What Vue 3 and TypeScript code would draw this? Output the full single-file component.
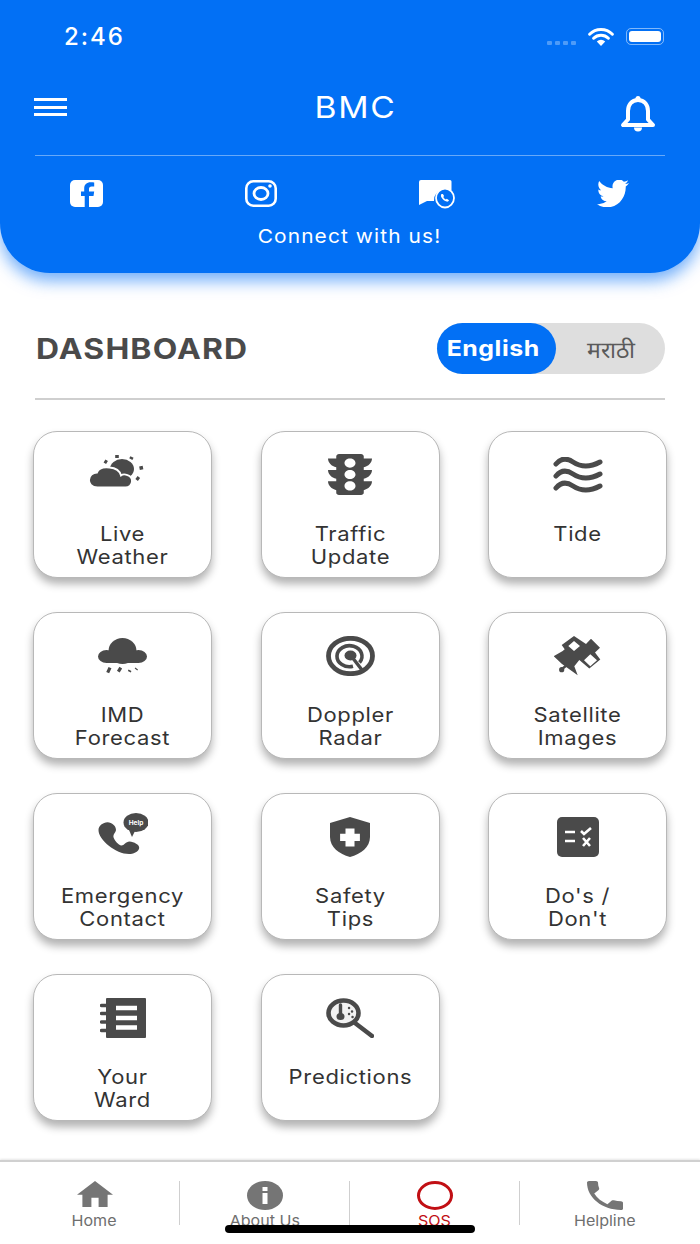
<script setup lang="ts">
interface Card {
  icon: string
  lines: string[]
}

const cards: Card[] = [
  { icon: 'weather', lines: ['Live', 'Weather'] },
  { icon: 'traffic', lines: ['Traffic', 'Update'] },
  { icon: 'tide', lines: ['Tide'] },
  { icon: 'rain', lines: ['IMD', 'Forecast'] },
  { icon: 'radar', lines: ['Doppler', 'Radar'] },
  { icon: 'satellite', lines: ['Satellite', 'Images'] },
  { icon: 'help', lines: ['Emergency', 'Contact'] },
  { icon: 'shield', lines: ['Safety', 'Tips'] },
  { icon: 'dos', lines: ["Do's /", "Don't"] },
  { icon: 'ward', lines: ['Your', 'Ward'] },
  { icon: 'predict', lines: ['Predictions'] }
]

const callPath = 'M6.62 10.79c1.44 2.83 3.76 5.14 6.59 6.59l2.2-2.2c.27-.27.67-.36 1.02-.24 1.12.37 2.33.57 3.57.57.55 0 1 .45 1 1V20c0 .55-.45 1-1 1-9.39 0-17-7.61-17-17 0-.55.45-1 1-1h3.5c.55 0 1 .45 1 1 0 1.25.2 2.45.57 3.57.11.35.03.74-.25 1.02l-2.2 2.2z'
</script>

<template>
  <div class="page">
    <header class="top">
      <div class="status">
        <span class="time">2:46</span>
        <div class="status-icons">
          <div class="dots"><i></i><i></i><i></i><i></i></div>
          <svg width="30" height="19" viewBox="0 0 30 19">
            <path d="M15 19l-4.200-4.600a6 6 0 0 1 8.400 0z" fill="#fff" />
            <path d="M7.600 11.200a10.500 10.500 0 0 1 14.800 0M3.600 7.200a16 16 0 0 1 22.800 0" fill="none" stroke="#fff" stroke-width="3" stroke-linecap="round" />
          </svg>
          <div class="battery"><b></b></div>
        </div>
      </div>
      <div class="bar">
        <div class="burger"><i></i><i></i><i></i></div>
        <h1><span>BMC</span></h1>
        <svg width="36" height="36" viewBox="0 0 36 36">
          <path d="M18 4c-6.500 0-10 5-10 11v8.500L3 29h30l-5-5.500V15C28 9 24.500 4 18 4z" fill="none" stroke="#fff" stroke-width="4" stroke-linejoin="round" />
          <circle cx="18" cy="2.500" r="2.500" fill="#fff" />
          <path d="M14 31.500h8a4 4 0 0 1-8 0z" fill="#fff" />
        </svg>
      </div>
      <div class="rule"></div>
      <div class="socials">
        <svg width="33" height="27" viewBox="0 0 33 27">
          <rect width="33" height="27" rx="5" fill="#fff" />
          <path d="M19 27V16h4.500l.7-4.500H19V9c0-1.500.7-2.500 2.700-2.500h2.500V2.600c-1-.2-2.300-.3-3.500-.3-4 0-6.500 2.300-6.500 6.200v3H11V16h3.700v11z" fill="#0270f5" />
        </svg>
        <svg width="32" height="27" viewBox="0 0 32 27">
          <rect x="1.300" y="1.300" width="29.400" height="24.400" rx="7" fill="none" stroke="#fff" stroke-width="2.600" />
          <ellipse cx="16" cy="13.500" rx="7" ry="6" fill="none" stroke="#fff" stroke-width="2.800" />
          <circle cx="25" cy="6" r="1.800" fill="#fff" />
        </svg>
        <svg width="36" height="29" viewBox="0 0 36 29">
          <path d="M2 0h29a1.500 1.500 0 0 1 1.500 1.500V10H24a10 10 0 0 0-9 11H8l-8 4V2a2 2 0 0 1 2-2z" fill="#fff" />
          <ellipse cx="26" cy="18" rx="9" ry="9.500" fill="#0270f5" stroke="#fff" stroke-width="1.800" />
          <path d="M22.500 14c-.8.800-.8 2.200.2 3.800 1 1.700 3 3.500 5 3.800 1.200.2 2-.5 2.300-1.400l-2.200-1.400-1 .8c-1-.4-2-1.500-2.500-2.500l.8-1-1.200-2.200z" fill="#fff" />
        </svg>
        <svg width="32" height="27" viewBox="0 2.500 24 19" preserveAspectRatio="none">
          <path d="M23.953 4.570a10 10 0 01-2.825.775 4.958 4.958 0 002.163-2.723c-.951.555-2.005.959-3.127 1.184a4.920 4.920 0 00-8.384 4.482C7.690 8.095 4.067 6.130 1.640 3.162a4.822 4.822 0 00-.666 2.475c0 1.710.870 3.213 2.188 4.096a4.904 4.904 0 01-2.228-.616v.060a4.923 4.923 0 003.946 4.827 4.996 4.996 0 01-2.212.085 4.936 4.936 0 004.604 3.417 9.867 9.867 0 01-6.102 2.105c-.390 0-.779-.023-1.170-.067a13.995 13.995 0 007.557 2.209c9.053 0 13.998-7.496 13.998-13.985 0-.210 0-.420-.015-.630A9.935 9.935 0 0024 4.590z" fill="#fff" />
        </svg>
      </div>
      <p class="connect">Connect with us!</p>
    </header>

    <main class="content">
      <div class="title-row">
        <h2>DASHBOARD</h2>
        <div class="toggle">
          <div class="on"><span>English</span></div>
          <span class="off">मराठी</span>
        </div>
      </div>
      <div class="title-rule"></div>

      <div class="grid">
        <div v-for="card in cards" :key="card.icon" class="card">
          <div class="slot">
            <svg v-if="card.icon === 'weather'" class="weather" width="56" height="34" viewBox="0 0 56 34">
              <ellipse cx="33" cy="15" rx="12" ry="10" fill="#4a4a4a" />
              <path d="M28 1v3M43 3l-1.200 2.200M54 13.500l-3.500 .7M50 25.500l-2.500-2M15.500 7l2.500 1.500" stroke="#4a4a4a" stroke-width="3.600" />
              <path d="M8.500 33.500C2 33.500 0 29 0 26c0-4.500 4-7.500 8-7.500 2-5.500 8.500-5.500 12.500-5 6.500 .5 10.500 4 11.500 8 2.500-2 11-1 11 5.500 0 4.500-3.500 6.500-6.500 6.500z" fill="#4a4a4a" stroke="#fff" stroke-width="1.800" />
            </svg>
            <svg v-else-if="card.icon === 'traffic'" width="44" height="41" viewBox="4 3 16 18" preserveAspectRatio="none">
              <path d="M20 10h-3V8.860c1.720-.450 3-2 3-3.860h-3V4c0-.550-.450-1-1-1H8c-.550 0-1 .450-1 1v1H4c0 1.860 1.280 3.410 3 3.860V10H4c0 1.860 1.280 3.410 3 3.860V15H4c0 1.860 1.280 3.410 3 3.860V20c0 .550.450 1 1 1h8c.550 0 1-.450 1-1v-1.140c1.720-.450 3-2 3-3.860h-3v-1.140c1.720-.450 3-2 3-3.860zm-8 9c-1.110 0-2-.900-2-2s.890-2 2-2c1.100 0 2 .900 2 2s-.890 2-2 2zm0-5c-1.110 0-2-.900-2-2s.890-2 2-2c1.100 0 2 .900 2 2s-.890 2-2 2zm0-5c-1.110 0-2-.890-2-2 0-1.110.890-2 2-2 1.100 0 2 .890 2 2 0 1.110-.890 2-2 2z" fill="#4a4a4a" />
            </svg>
            <svg v-else-if="card.icon === 'tide'" width="50" height="36" viewBox="0 0 50 36">
              <path d="M3 7C8 1 14 1 20 5s14 7 27 0M3 19C8 13 14 13 20 17s14 7 27 0M3 31C8 25 14 25 20 29s14 7 27 0" fill="none" stroke="#4a4a4a" stroke-width="5" stroke-linecap="round" />
            </svg>
            <svg v-else-if="card.icon === 'rain'" width="49" height="36" viewBox="0 0 49 36">
              <ellipse cx="24.500" cy="13" rx="14" ry="13" fill="#4a4a4a" />
              <ellipse cx="8.500" cy="18.500" rx="8.500" ry="6.500" fill="#4a4a4a" />
              <ellipse cx="40.500" cy="18.500" rx="8.500" ry="6.500" fill="#4a4a4a" />
              <rect x="8" y="14" width="33" height="11" fill="#4a4a4a" />
              <path d="M9.700 34.700l2.300-5M20.300 33.700l2.500-4M31.300 33.700l.7-1.500M38 31.500l.7-1" stroke="#4a4a4a" stroke-width="3.200" />
            </svg>
            <svg v-else-if="card.icon === 'radar'" width="49" height="40" viewBox="0 0 49 40">
              <ellipse cx="24.500" cy="20" rx="22" ry="17.700" fill="none" stroke="#4a4a4a" stroke-width="4.800" />
              <path d="M33.500 26.500A12.500 10.500 0 1 0 27 30.300" fill="none" stroke="#4a4a4a" stroke-width="3.600" />
              <ellipse cx="24.500" cy="19.500" rx="6" ry="5" fill="#4a4a4a" />
              <path d="M26 21l10 13" stroke="#4a4a4a" stroke-width="3.400" />
            </svg>
            <svg v-else-if="card.icon === 'satellite'" width="48" height="40" viewBox="0 0 48 40">
              <path d="M20 0l12 8 5-5.300 9 9-5 4.800 5.300 7-11 9-10-8.500-5 6.200L23.700 39.300 8 28-.3 20.300 8.700 15l2-1.800L7.700 9z" fill="#4a4a4a" />
              <path d="M20 5l6 5-6 5-5.700-5zM36.300 18.300l6.700 6-6.700 6-6.300-6z" fill="#fff" />
              <path d="M8 33l5-4" stroke="#4a4a4a" stroke-width="2.400" />
              <circle cx="7.700" cy="33.700" r="2.600" fill="#4a4a4a" />
            </svg>
            <svg v-else-if="card.icon === 'help'" class="help" width="50" height="45" viewBox="-2 0 50 45">
              <path d="M7.500 9.300c4.500.2 8.500 3.700 8.500 7.700-.5 3-3 4-2.500 7.300 1 3.200 4.500 7.200 7.500 8.200 3 .5 4.500-4 8.500-4 4.500.5 10 3 9.700 6.500-.7 4-6.200 6-10.200 6-13 0-30.500-14-30.500-24 0-4 4.500-7.700 9-7.700z" fill="#4a4a4a" />
              <ellipse cx="36" cy="9.500" rx="12.500" ry="9.500" fill="#4a4a4a" />
              <path d="M29 17l3 7 3-6z" fill="#4a4a4a" />
              <text x="36" y="12" text-anchor="middle" class="help-text">Help</text>
            </svg>
            <svg v-else-if="card.icon === 'shield'" width="40" height="40" viewBox="0 0 40 40">
              <path d="M20 0l20 6v14c0 10-9 17-20 20C9 37 0 30 0 20V6z" fill="#4a4a4a" />
              <path d="M15 11h10v6h6v8h-6v6H15v-6H9v-8h6z" fill="#fff" transform="translate(2 1.500) scale(.9)" />
            </svg>
            <svg v-else-if="card.icon === 'dos'" width="42" height="40" viewBox="0 0 42 40">
              <rect width="42" height="40" rx="5" fill="#4a4a4a" />
              <path d="M8 15h10M8 24h10" stroke="#fff" stroke-width="2.600" />
              <path d="M24 14l3 3 7-6M26 21l7 8M33 21l-7 8" fill="none" stroke="#fff" stroke-width="2.600" />
            </svg>
            <svg v-else-if="card.icon === 'ward'" width="46" height="40" viewBox="0 0 46 40">
              <path d="M7 0h38a1 1 0 0 1 1 1v38a1 1 0 0 1-1 1H7a1 1 0 0 1-1-1V1a1 1 0 0 1 1-1z" fill="#4a4a4a" />
              <path d="M1.500 7.500h6M1.500 15.500h6M1.500 24h6M1.500 32.500h6" stroke="#4a4a4a" stroke-width="3.400" stroke-linecap="round" />
              <path d="M16 10h21M16 20h21M16 29.500h21" stroke="#fff" stroke-width="4.500" />
            </svg>
            <svg v-else-if="card.icon === 'predict'" width="48" height="40" viewBox="0 0 48 40">
              <ellipse cx="17.500" cy="15" rx="15" ry="12.500" fill="#f2f2f2" stroke="#4a4a4a" stroke-width="4.600" />
              <path d="M14.500 7v9" stroke="#4a4a4a" stroke-width="3.400" stroke-linecap="round" />
              <ellipse cx="14.500" cy="18.500" rx="4" ry="3.500" fill="#4a4a4a" />
              <path d="M23 10h.1M26 13.500h.1M23 16h.1M26.500 19h.1" stroke="#4a4a4a" stroke-width="2.400" stroke-linecap="round" />
              <path d="M29 25l17 13" stroke="#4a4a4a" stroke-width="4.500" stroke-linecap="round" />
            </svg>
          </div>
          <p v-for="line in card.lines" :key="line" class="label">{{ line }}</p>
        </div>
      </div>
    </main>

    <nav class="nav">
      <div class="tab">
        <svg width="36" height="26" viewBox="2 3 20 17" preserveAspectRatio="none">
          <path d="M10 20v-6h4v6h5v-8h3L12 3 2 12h3v8z" fill="#757575" />
        </svg>
        <span>Home</span>
      </div>
      <div class="tab">
        <svg width="36" height="29" viewBox="0 0 36 29">
          <ellipse cx="18" cy="14.500" rx="18" ry="14.500" fill="#757575" />
          <rect x="15.500" y="12" width="5" height="11" fill="#fff" />
          <rect x="15.500" y="6" width="5" height="4" fill="#fff" />
        </svg>
        <span>About Us</span>
      </div>
      <div class="tab sos">
        <svg width="36" height="29" viewBox="0 0 36 29">
          <ellipse cx="18" cy="14.500" rx="16.500" ry="13" fill="none" stroke="#c10f14" stroke-width="3" />
        </svg>
        <span>SOS</span>
      </div>
      <div class="tab">
        <svg width="36" height="29" viewBox="3 3 18 18" preserveAspectRatio="none">
          <path :d="callPath" fill="#757575" />
        </svg>
        <span>Helpline</span>
      </div>
      <div class="home-bar"></div>
    </nav>
  </div>
</template>

<style scoped>
.page {
  width: 700px;
  height: 1244px;
  display: flex;
  flex-direction: column;
  overflow: hidden;
  background: #fff;
  font-family: Inter, Roboto, "Liberation Sans", sans-serif;
}

.top {
  height: 273px;
  flex-shrink: 0;
  box-sizing: border-box;
  padding-top: 23px;
  background: #0270f5;
  border-radius: 0 0 50px 50px;
  box-shadow: 0 8px 16px rgba(2, 112, 245, 0.55);
  color: #fff;
}

.status {
  height: 26px;
  display: flex;
  align-items: center;
  justify-content: space-between;
  padding: 0 33px 0 64px;
}

.time {
  font-size: 24px;
  font-weight: 500;
  letter-spacing: 2px;
}

.status-icons {
  display: flex;
  align-items: center;
  gap: 10px;
}

.dots {
  display: flex;
  gap: 3px;
  margin-top: 14px;
}

.dots i {
  width: 5px;
  height: 4px;
  background: rgba(255, 255, 255, 0.3);
  border-radius: 1px;
}

.battery {
  width: 38px;
  height: 17px;
  box-sizing: border-box;
  padding: 2px;
  border: 1px solid rgba(255, 255, 255, 0.5);
  border-radius: 5px;
  margin-right: 3px;
}

.battery b {
  display: block;
  height: 100%;
  background: #fff;
  border-radius: 3px;
}

.bar {
  height: 36px;
  margin-top: 47px;
  padding: 0 44px 0 34px;
  display: flex;
  justify-content: space-between;
}

.burger {
  width: 33px;
  height: 18px;
  margin-top: 2px;
  display: flex;
  flex-direction: column;
  justify-content: space-between;
}

.burger i {
  height: 3px;
  background: #fff;
}

.bar h1 {
  flex: 1;
  margin: -7px 0 0;
  padding-left: 25px;
  text-align: center;
  font-size: 30px;
  font-weight: 400;
  line-height: 36px;
  letter-spacing: 1.500px;
}

.bar h1 span {
  display: inline-block;
  transform: scaleX(1.12);
}

.rule {
  height: 1px;
  margin: 23px 35px 0;
  background: rgba(255, 255, 255, 0.4);
}

.socials {
  height: 29px;
  margin-top: 24px;
  padding: 0 71px 0 70px;
  display: flex;
  justify-content: space-between;
  align-items: flex-start;
}

.connect {
  margin: 16px 0 0 -1px;
  font-size: 19px;
  line-height: 24px;
  text-align: center;
  letter-spacing: 1px;
  transform: scaleX(1.1);
}

.content {
  flex: 1;
  padding: 50px 33px 0;
}

.title-row {
  height: 51px;
  display: flex;
  align-items: center;
  justify-content: space-between;
  padding: 0 2px 0 3px;
}

.title-row h2 {
  margin: 0;
  font-size: 28px;
  font-weight: 700;
  letter-spacing: 1px;
  color: #4a4a4a;
  transform: scaleX(1.14);
  transform-origin: left center;
}

.toggle {
  width: 228px;
  height: 51px;
  display: flex;
  align-items: center;
  background: #dedede;
  border-radius: 26px;
}

.on {
  width: 119px;
  height: 51px;
  box-sizing: border-box;
  padding-right: 6px;
  line-height: 51px;
  text-align: center;
  background: #0270f5;
  color: #fff;
  font-size: 22px;
  font-weight: 700;
  letter-spacing: 0.500px;
  border-radius: 26px;
}

.on span {
  display: inline-block;
  transform: scaleX(1.13);
}

.off {
  flex: 1;
  text-align: center;
  font-size: 23px;
  font-weight: 500;
  color: #5a5a5a;
}

.title-rule {
  height: 2px;
  margin: 24px 2px 0;
  background: #cfcfcf;
}

.grid {
  margin-top: 31px;
  display: grid;
  grid-template-columns: repeat(3, 179px);
  grid-auto-rows: 147px;
  column-gap: 48.500px;
  row-gap: 34px;
}

.card {
  box-sizing: border-box;
  border: 1.500px solid #b8b8b8;
  border-radius: 24px;
  background: #fff;
  box-shadow: 0 6px 8px rgba(0, 0, 0, 0.3);
  text-align: center;
}

.slot {
  height: 85px;
  margin-bottom: 6px;
  display: flex;
  align-items: center;
  justify-content: center;
}

.weather {
  margin: 0 11px 7px 0;
}

.help {
  margin-top: -3px;
}

.label {
  margin: 0;
  font-size: 20px;
  line-height: 23px;
  letter-spacing: 0.600px;
  color: #333;
  transform: scaleX(1.1);
}

.help-text {
  font-size: 6.500px;
  font-weight: 700;
  fill: #fff;
}

.nav {
  height: 84px;
  flex-shrink: 0;
  box-sizing: border-box;
  padding: 19px 10px 0;
  border-top: 2px solid #d0d0d0;
  display: grid;
  grid-template-columns: repeat(4, 170px);
  position: relative;
  box-shadow: 0 -1px 2px rgba(0, 0, 0, 0.1);
}

.tab {
  height: 44px;
  display: flex;
  flex-direction: column;
  align-items: center;
  justify-content: space-between;
  border-right: 1px solid #cfcfcf;
}

.tab:nth-child(4) {
  border-right: 0;
}

.tab span {
  margin-bottom: -4px;
  font-size: 15px;
  line-height: 16px;
  color: #6f6f6f;
  transform: scaleX(1.07);
}

.tab.sos span {
  color: #c10f14;
}

.home-bar {
  position: absolute;
  left: 225px;
  top: 63px;
  width: 250px;
  height: 8px;
  border-radius: 4px;
  background: #000;
}
</style>
